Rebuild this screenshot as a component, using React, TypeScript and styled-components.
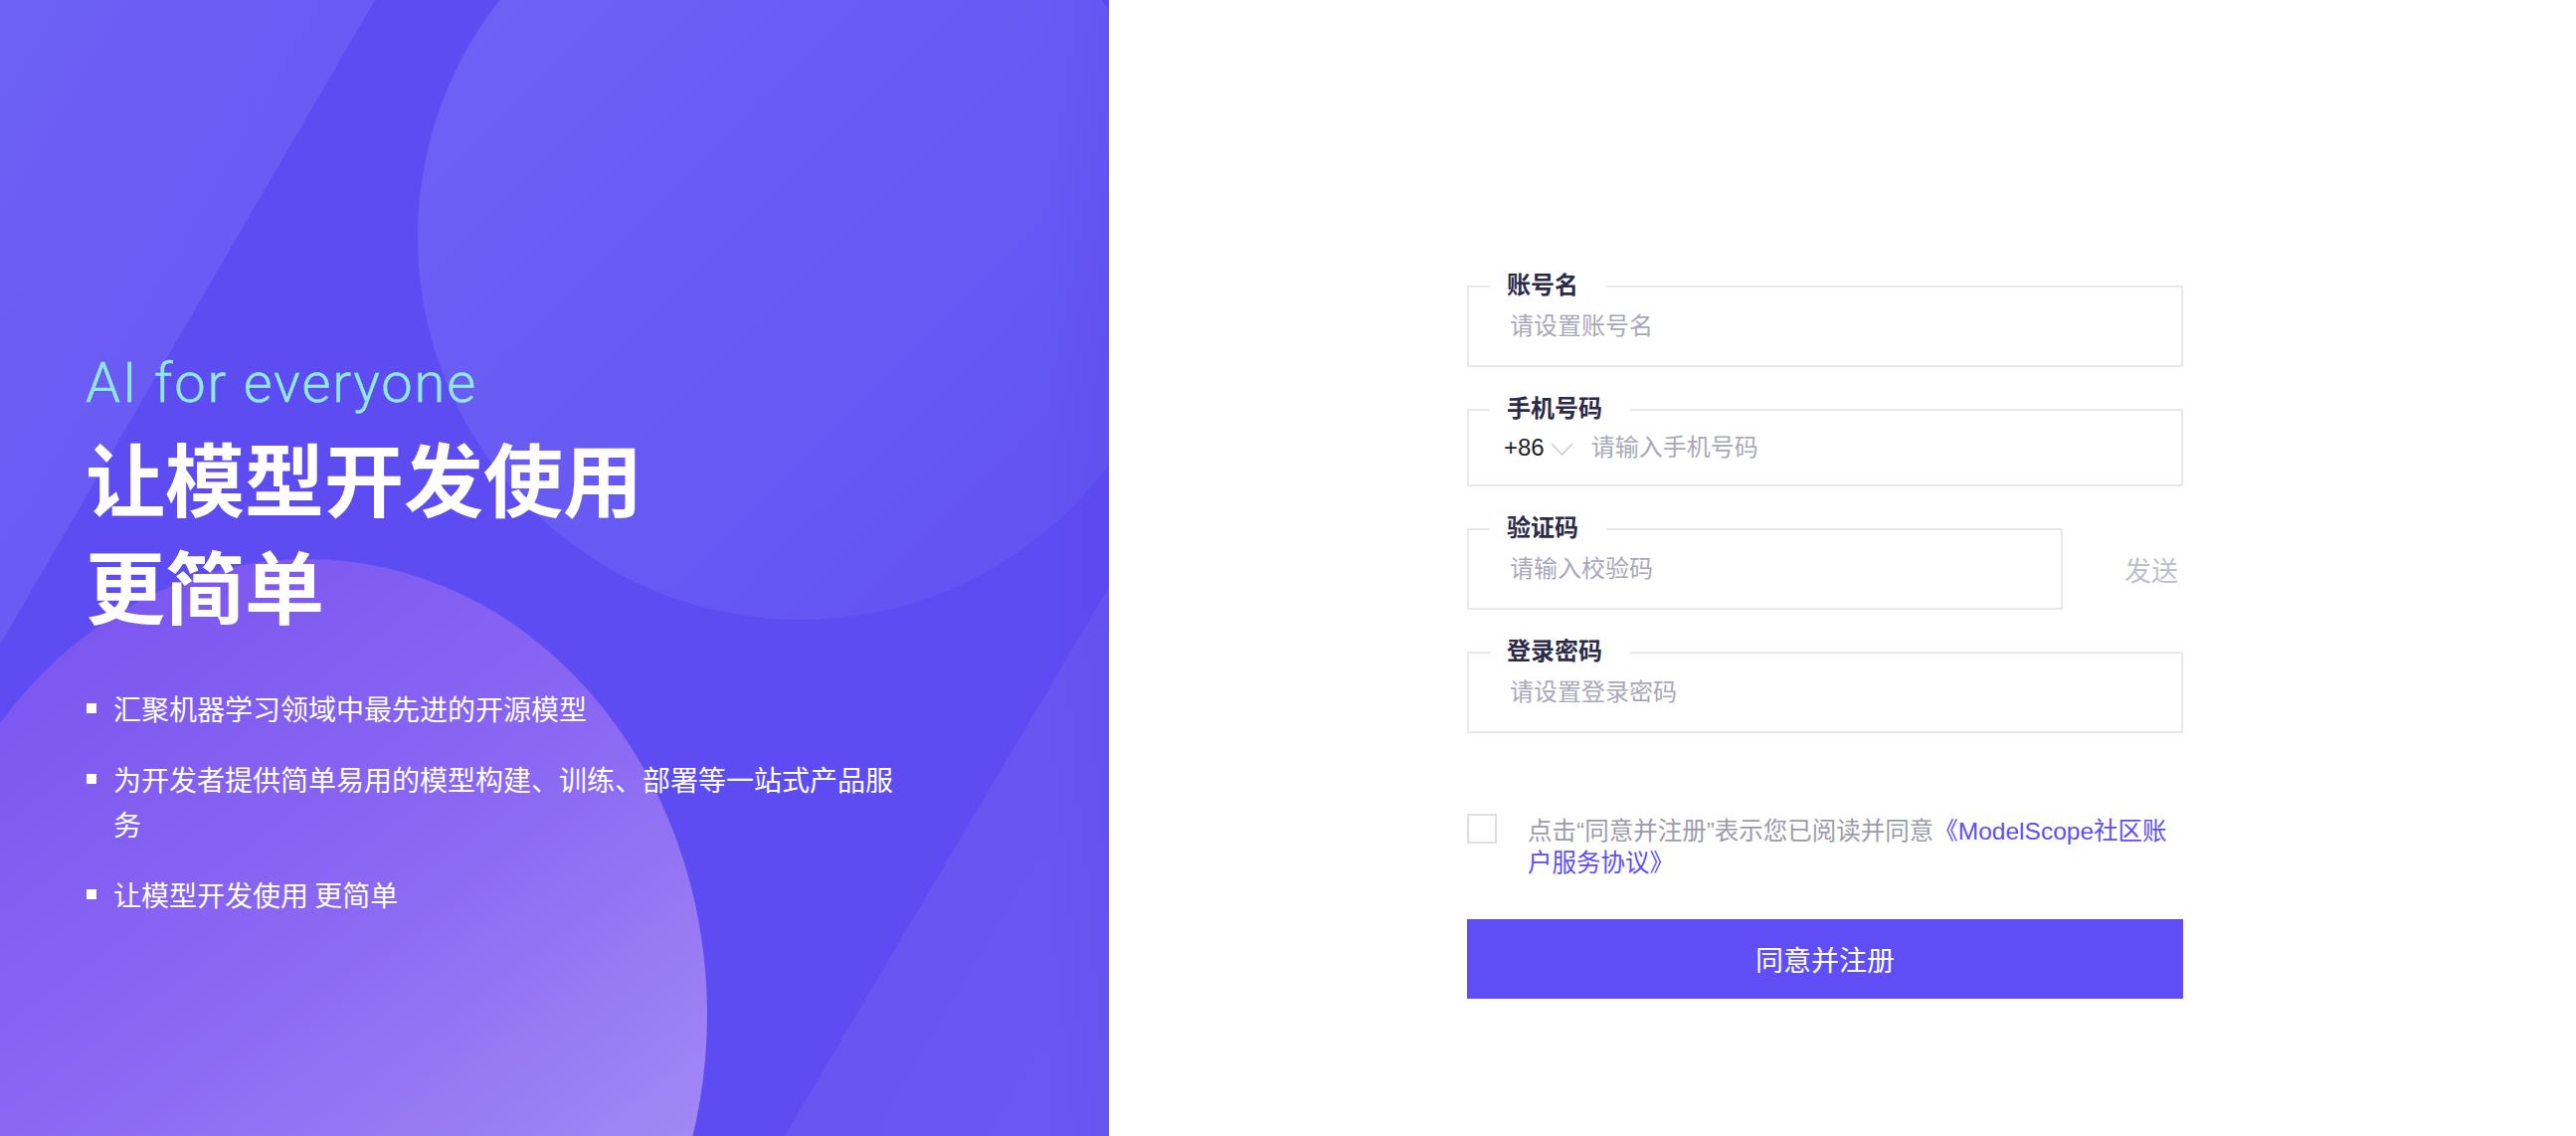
import React from "react";
import styled, { createGlobalStyle } from "styled-components";

const GlobalStyle = createGlobalStyle`
  html, body {
    margin: 0;
    padding: 0;
    background: #ffffff;
  }
  body {
    font-family: "Liberation Sans", "Noto Sans CJK SC", sans-serif;
  }
  *, *::before, *::after {
    box-sizing: border-box;
  }
`;

const Page = styled.div`
  display: flex;
  width: 100%;
  height: 1142px;
  overflow: hidden;
`;

const LeftPanel = styled.section`
  position: relative;
  flex: 0 0 1115px;
  height: 100%;
  overflow: hidden;
  background: #5e4cf3;
`;

const Backdrop = styled.svg`
  position: absolute;
  inset: 0;
  width: 100%;
  height: 100%;
  display: block;
`;

const Intro = styled.div`
  position: relative;
  display: flex;
  flex-direction: column;
  padding: 352px 0 0 86px;
`;

const Tagline = styled.div`
  font-family: "Roboto", "Liberation Sans", sans-serif;
  font-weight: 300;
  font-size: 56px;
  line-height: 66px;
  color: #90e9df;
  letter-spacing: 1.8px;
  -webkit-text-stroke: 0.4px #90e9df;
`;

const Headline = styled.h1`
  margin: 6px 0 0;
  font-family: "Noto Sans CJK SC", sans-serif;
  font-weight: 700;
  font-size: 80px;
  line-height: 108px;
  color: #ffffff;
`;

const FeatureList = styled.ul`
  list-style: none;
  margin: 50px 0 0;
  padding: 0;
  width: 828px;
  display: flex;
  flex-direction: column;
  gap: 26px;
`;

const FeatureItem = styled.li`
  display: flex;
  align-items: flex-start;
  font-family: "Noto Sans CJK SC", sans-serif;
  font-size: 28px;
  line-height: 45px;
  color: #ffffff;
`;

const Bullet = styled.span`
  flex: none;
  width: 10px;
  height: 10px;
  margin: 17px 17px 0 1px;
  background: #ffffff;
`;

const RightPanel = styled.section`
  flex: 1;
  height: 100%;
  background: #ffffff;
  padding: 287px 0 0 360px;
`;

const Form = styled.form`
  width: 720px;
  display: flex;
  flex-direction: column;
`;

const Fields = styled.div`
  display: flex;
  flex-direction: column;
  gap: 42px;
`;

const FieldRow = styled.div`
  display: flex;
  align-items: center;
`;

const FieldBox = styled.div<{ $h: number }>`
  position: relative;
  flex: 1 1 auto;
  height: ${(p) => p.$h}px;
  border: 2px solid #e8e8ee;
  display: flex;
  align-items: center;
  padding-left: 35px;
`;

const FieldLabel = styled.label`
  position: absolute;
  top: -14px;
  left: 21px;
  padding: 0 28px 0 17px;
  background: #ffffff;
  font-size: 24px;
  line-height: 24px;
  font-weight: 700;
  color: #2b2a48;
`;

const Input = styled.input`
  flex: 1;
  min-width: 0;
  border: none;
  outline: none;
  background: transparent;
  padding: 0 0 0 6px;
  font-family: "Liberation Sans", "Noto Sans CJK SC", sans-serif;
  font-size: 24px;
  color: #333;
  &::placeholder {
    color: #a9a8b9;
  }
`;

const PhoneInput = styled(Input)`
  margin-left: 12px;
`;

const Prefix = styled.span`
  font-size: 24px;
  color: #1f1f24;
`;

const Chevron = styled.svg`
  flex: none;
  width: 23px;
  height: 13px;
  margin-left: 6px;
  margin-top: 2px;
`;

const SendButton = styled.button`
  flex: none;
  width: 121px;
  border: none;
  background: none;
  padding: 0 5px 0 0;
  text-align: right;
  font-family: "Noto Sans CJK SC", sans-serif;
  font-size: 27px;
  color: #c0bfcd;
  cursor: pointer;
`;

const AgreementRow = styled.div`
  display: flex;
  align-items: flex-start;
  gap: 31px;
  margin-top: 81px;
`;

const CheckBox = styled.span`
  flex: none;
  width: 30px;
  height: 30px;
  border: 2px solid #dedede;
  background: #fff;
`;

const AgreementText = styled.p`
  margin: 2px 0 0;
  width: 655px;
  font-size: 24.5px;
  line-height: 32px;
  color: #9c9bab;
`;

const Link = styled.a`
  color: #5e4ef4;
  text-decoration: none;
`;

const SubmitButton = styled.button`
  margin-top: 40px;
  width: 100%;
  height: 80px;
  border: none;
  background: #5f4ef5;
  color: #ffffff;
  font-family: "Noto Sans CJK SC", sans-serif;
  font-size: 28px;
  cursor: pointer;
`;

const features = [
  "汇聚机器学习领域中最先进的开源模型",
  "为开发者提供简单易用的模型构建、训练、部署等一站式产品服务",
  "让模型开发使用 更简单",
];

function BackgroundArt() {
  return (
    <Backdrop viewBox="0 0 1115 1142" preserveAspectRatio="none" aria-hidden="true">
      <defs>
        <linearGradient id="bandTL" x1="0" y1="0" x2="1" y2="1">
          <stop offset="0" stopColor="#6d60f4" />
          <stop offset="1" stopColor="#6656f3" />
        </linearGradient>
        <linearGradient id="bigCircle" x1="0" y1="0" x2="1" y2="1">
          <stop offset="0" stopColor="#6e63f6" />
          <stop offset="0.6" stopColor="#6759f4" />
          <stop offset="1" stopColor="#6051f2" />
        </linearGradient>
        <linearGradient id="bandBR" x1="0" y1="0" x2="1" y2="1">
          <stop offset="0" stopColor="#6553f3" />
          <stop offset="1" stopColor="#6a58f2" />
        </linearGradient>
        <linearGradient id="lowCircle" x1="0.15" y1="0.1" x2="0.7" y2="0.95">
          <stop offset="0" stopColor="#7b56f0" />
          <stop offset="0.45" stopColor="#8a68f3" />
          <stop offset="1" stopColor="#a790f4" />
        </linearGradient>
        <linearGradient id="edgeShade" x1="0" y1="0" x2="1" y2="0">
          <stop offset="0" stopColor="#4a3ad8" stopOpacity="0" />
          <stop offset="1" stopColor="#4a3ad8" stopOpacity="0.12" />
        </linearGradient>
      </defs>
      <rect x="0" y="0" width="1115" height="1142" fill="#5e4cf3" />
      <polygon points="0,0 377,0 0,648" fill="url(#bandTL)" />
      <circle cx="805" cy="238" r="385" fill="url(#bigCircle)" />
      <polygon points="1115,590 1115,1142 789,1142" fill="url(#bandBR)" />
      <ellipse cx="309" cy="1020" rx="402" ry="458" fill="url(#lowCircle)" />
      <rect x="1050" y="0" width="65" height="1142" fill="url(#edgeShade)" />
    </Backdrop>
  );
}

export default function App() {
  return (
    <>
      <GlobalStyle />
      <Page>
        <LeftPanel>
          <BackgroundArt />
          <Intro>
            <Tagline>AI for everyone</Tagline>
            <Headline>
              让模型开发使用
              <br />
              更简单
            </Headline>
            <FeatureList>
              {features.map((f) => (
                <FeatureItem key={f}>
                  <Bullet />
                  <span>{f}</span>
                </FeatureItem>
              ))}
            </FeatureList>
          </Intro>
        </LeftPanel>
        <RightPanel>
          <Form onSubmit={(e) => e.preventDefault()}>
            <Fields>
              <FieldBox $h={82}>
                <FieldLabel>账号名</FieldLabel>
                <Input placeholder="请设置账号名" />
              </FieldBox>
              <FieldBox $h={78}>
                <FieldLabel>手机号码</FieldLabel>
                <Prefix>+86</Prefix>
                <Chevron viewBox="0 0 23 13">
                  <polyline
                    points="1,1 11.5,12 22,1"
                    fill="none"
                    stroke="#c6c6d0"
                    strokeWidth="1.3"
                  />
                </Chevron>
                <PhoneInput placeholder="请输入手机号码" />
              </FieldBox>
              <FieldRow>
                <FieldBox $h={82}>
                  <FieldLabel>验证码</FieldLabel>
                  <Input placeholder="请输入校验码" />
                </FieldBox>
                <SendButton type="button">发送</SendButton>
              </FieldRow>
              <FieldBox $h={82}>
                <FieldLabel>登录密码</FieldLabel>
                <Input type="password" placeholder="请设置登录密码" />
              </FieldBox>
            </Fields>
            <AgreementRow>
              <CheckBox />
              <AgreementText>
                点击“同意并注册”表示您已阅读并同意
                <Link href="#">《ModelScope社区账户服务协议》</Link>
              </AgreementText>
            </AgreementRow>
            <SubmitButton type="submit">同意并注册</SubmitButton>
          </Form>
        </RightPanel>
      </Page>
    </>
  );
}
